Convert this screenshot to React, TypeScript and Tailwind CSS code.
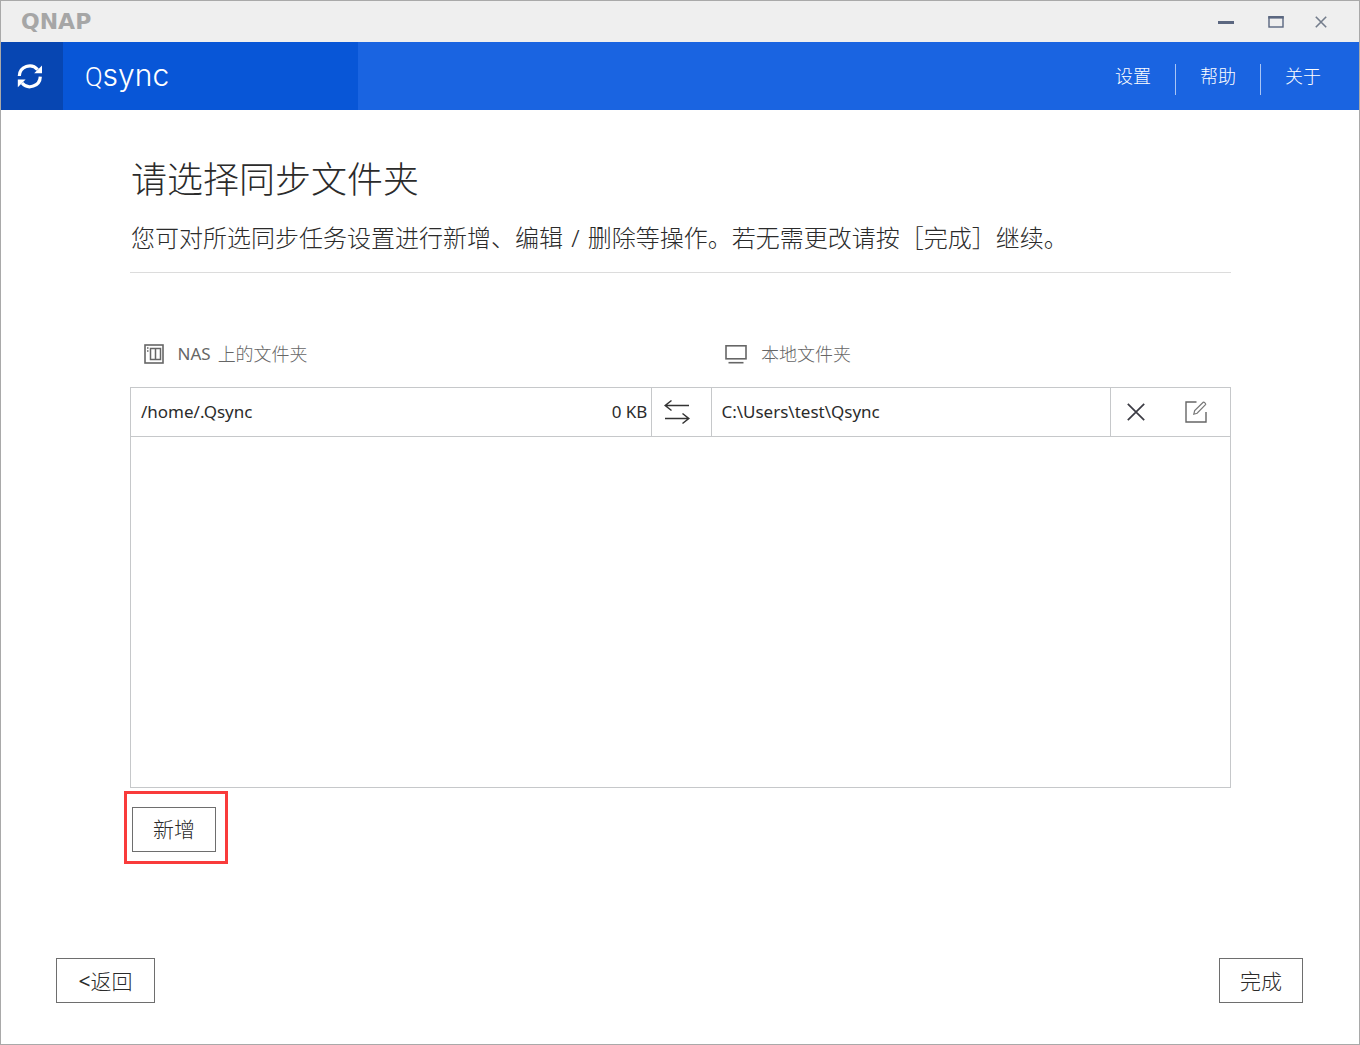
import React from 'react';

type NavItem = {
  label: string;
  href: string;
};

type SyncPair = {
  remote: string;
  size: string;
  local: string;
};

const navItems: NavItem[] = [
  { label: '设置', href: '#settings' },
  { label: '帮助', href: '#help' },
  { label: '关于', href: '#about' },
];

const pairs: SyncPair[] = [
  { remote: '/home/.Qsync', size: '0 KB', local: 'C:\\Users\\test\\Qsync' },
];

const SyncIcon: React.FC = () => (
  <svg width="26" height="26" viewBox="0 0 26 26" fill="none" aria-hidden="true">
    <path d="M2.3 13A10.4 10.4 0 0 1 20.6 6.6" stroke="#fff" strokeWidth="3.2" />
    <path d="M23.3 13.6A10.4 10.4 0 0 1 5 20" stroke="#fff" strokeWidth="3.2" />
    <path d="M25 2.4v7.8h-7.8z" fill="#fff" />
    <path d="M.8 24.2v-7.8h7.8z" fill="#fff" />
  </svg>
);

const NasIcon: React.FC = () => (
  <svg width="20" height="20" viewBox="0 0 20 20" fill="none" stroke="#666" aria-hidden="true">
    <rect x="1" y="1" width="18" height="18" strokeWidth="1.6" />
    <path d="M6.5 4.5h10v11h-10zM11.5 4.5v11" strokeWidth="1.5" />
    <path d="M3 4h1.5M3 7h1.5" strokeWidth="1.4" />
  </svg>
);

const MonitorIcon: React.FC = () => (
  <svg width="22" height="20" viewBox="0 0 22 20" fill="none" stroke="#666" strokeWidth="1.6" aria-hidden="true">
    <rect x="1" y="1.8" width="20" height="13" />
    <path d="M3.5 18.7h15" />
  </svg>
);

const SwapIcon: React.FC = () => (
  <svg width="26" height="26" viewBox="0 0 26 26" fill="none" stroke="#333" strokeWidth="1.5" aria-hidden="true">
    <path d="M25 6.5H1.5M7.5 1.5L1.2 6.5l6.3 5" />
    <path d="M1 19.5h23.5M18.5 14.5l6.3 5-6.3 5" />
  </svg>
);

const EditIcon: React.FC = () => (
  <svg width="22" height="22" viewBox="0 0 22 22" fill="none" stroke="#777" aria-hidden="true">
    <path d="M11.5 1H1v20h20V11" stroke="#666" strokeWidth="1.4" />
    <path d="M8.8 13.2l.9-3.6 8.5-8.3c.8-.7 3 1.4 2.3 2.3l-8.4 8.6z" strokeWidth="1.2" />
  </svg>
);

const App: React.FC = () => {
  const button = 'h-[45px] border border-[#6e6e6e] bg-white px-5 text-[21px] leading-6 font-light';

  return (
    <div className="flex min-h-screen flex-col border border-[#a9a9a9] bg-white font-['Noto_Sans','Noto_Sans_CJK_SC',sans-serif] text-[#2b2b2b]">
      <div className="flex h-[41px] items-center justify-between bg-[#efefef] pt-px pr-8 pl-5">
        <span className="font-['DejaVu_Sans',sans-serif] text-[22px] leading-6 font-bold text-[#a6a6a6]">QNAP</span>
        <div className="flex items-center gap-[31px]">
          <button type="button" aria-label="最小化">
            <svg width="20" height="14" viewBox="0 0 20 14"><path d="M1 7.5h16" stroke="#5b6780" strokeWidth="3" /></svg>
          </button>
          <button type="button" aria-label="最大化">
            <svg width="16" height="14" viewBox="0 0 16 14" fill="none" stroke="#5b6780">
              <rect x="1" y="2" width="14" height="10" strokeWidth="1.4" />
              <path d="M.3 2.3h15.4" strokeWidth="2.6" />
            </svg>
          </button>
          <button type="button" aria-label="关闭">
            <svg width="12" height="14" viewBox="0 0 12 14"><path d="M.8 1.8l10.4 10.4M11.2 1.8L.8 12.2" stroke="#747d8c" strokeWidth="1.6" /></svg>
          </button>
        </div>
      </div>

      <header className="flex h-[68px] bg-[#1a64e1] font-light text-white">
        <div className="flex w-[62px] items-center bg-[#0746b2] pl-4">
          <SyncIcon />
        </div>
        <div className="flex w-[295px] items-center bg-[#0856d7] pl-[22px]">
          <span className="font-['Inter',sans-serif] text-[30px] leading-10 font-light">
            <span className="font-['Roboto',sans-serif] text-[26px]">Q</span>sync
          </span>
        </div>
        <nav className="ml-auto flex items-center pt-[7px] pr-[14px]">
          {navItems.map((item) => (
            <a
              key={item.label}
              href={item.href}
              className="h-[31px] border-l border-[#a9c5f5] px-6 text-[18px] leading-6 first:border-l-0"
            >
              {item.label}
            </a>
          ))}
        </nav>
      </header>

      <main className="pt-12 pr-[128px] pl-[129px]">
        <h1 className="pl-px text-[36px] leading-[44px] font-light">请选择同步文件夹</h1>
        <p className="mt-5 border-b border-[#dcdcdc] pb-[18px] pl-px text-[24px] leading-8 font-light">
          您可对所选同步任务设置进行新增、编辑<span className="mx-0.5"> / </span>删除等操作。若无需更改请按［完成］继续。
        </p>

        <table className="mt-12 w-full table-fixed border-collapse text-left text-[17px] leading-6">
          <colgroup>
            <col className="w-[47.4%]" />
            <col className="w-[60px]" />
            <col />
            <col className="w-[120px]" />
          </colgroup>
          <thead>
            <tr className="h-[66px] text-[#666]">
              <th colSpan={2} className="pl-[13px] font-normal">
                <span className="flex items-center gap-[14px]">
                  <NasIcon />
                  <span className="flex items-center gap-[7px]">
                    <span>NAS</span>
                    <span className="text-[18px] font-light">上的文件夹</span>
                  </span>
                </span>
              </th>
              <th colSpan={2} className="pl-[13px] font-normal">
                <span className="flex items-center gap-[14px]">
                  <MonitorIcon />
                  <span className="text-[18px] font-light">本地文件夹</span>
                </span>
              </th>
            </tr>
          </thead>
          <tbody>
            {pairs.map((pair) => (
              <tr key={pair.remote} className="h-[49px]">
                <td className="border border-[#c6c8ca] pr-1 pl-[10px]">
                  <span className="flex justify-between">
                    <span>{pair.remote}</span>
                    <span>{pair.size}</span>
                  </span>
                </td>
                <td className="border border-[#c6c8ca] pl-3">
                  <SwapIcon />
                </td>
                <td className="border border-[#c6c8ca] px-[9px]">{pair.local}</td>
                <td className="border border-[#c6c8ca] pl-4">
                  <span className="flex items-center gap-10">
                    <button type="button" aria-label="删除">
                      <svg width="18" height="18" viewBox="0 0 18 18">
                        <path d="M.8.8l16.4 16.4M17.2.8L.8 17.2" stroke="#3c3c44" strokeWidth="1.7" />
                      </svg>
                    </button>
                    <button type="button" aria-label="编辑">
                      <EditIcon />
                    </button>
                  </span>
                </td>
              </tr>
            ))}
          </tbody>
        </table>
        <div className="h-[351px] border border-t-0 border-[#c6c8ca]" />

        {/* Highlighted add action */}
        <div className="mt-[3px] -ml-[6px] w-fit border-3 border-[#f93b3b] pt-[13px] pr-[9px] pb-[9px] pl-[5px]">
          <button type="button" className={`${button} block`}>新增</button>
        </div>
      </main>

      <footer className="mt-auto flex justify-between pr-[56px] pb-[41px] pl-[55px]">
        <button type="button" className={`${button} min-w-[99px]`}>
          <span className="font-normal">&lt;</span>返回
        </button>
        <button type="button" className={button}>完成</button>
      </footer>
    </div>
  );
};

export default App;
